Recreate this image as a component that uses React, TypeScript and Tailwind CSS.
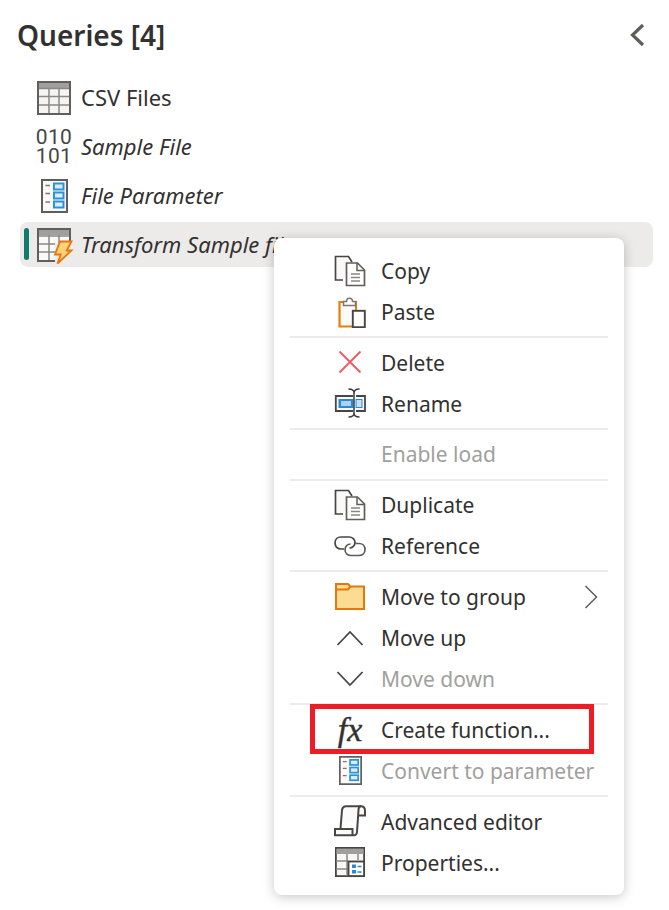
import React from "react";

/* ---------------------------------- Icons --------------------------------- */
function TableIcon() {
  return (
    <svg width="34" height="34" viewBox="0 0 34 34" fill="none">
      <rect x="1" y="1" width="32" height="32" fill="#f5f4f3" stroke="#605e5c" strokeWidth="2" />
      <rect x="2" y="2" width="30" height="5" fill="#a19f9d" />
      <path d="M2 7.5H32M2 15.5H32M2 24H32" stroke="#8a8886" strokeWidth="1.5" />
      <path d="M12 7V32M22 7V32" stroke="#8a8886" strokeWidth="1.5" />
    </svg>
  );
}

function ParamIcon({ width = 27, height = 34 }: { width?: number; height?: number }) {
  return (
    <svg width={width} height={height} viewBox="0 0 27 34" fill="none">
      <rect x="1" y="1" width="25" height="32" fill="#faf9f8" stroke="#605e5c" strokeWidth="2" />
      <path d="M4.5 6.5H9M4.5 14.5H9M4.5 23H9" stroke="#7a7876" strokeWidth="1.5" />
      <rect x="13" y="4.5" width="9.5" height="6" fill="#deecf9" stroke="#2b94d8" strokeWidth="2" />
      <rect x="13" y="13.5" width="9.5" height="6" fill="#deecf9" stroke="#2b94d8" strokeWidth="2" />
      <rect x="13" y="22.5" width="9.5" height="6" fill="#deecf9" stroke="#2b94d8" strokeWidth="2" />
    </svg>
  );
}

function TransformIcon() {
  return (
    <svg width="34" height="34" viewBox="0 0 34 34" fill="none" className="overflow-visible">
      <rect x="1" y="1" width="32" height="32" fill="#fbfafa" stroke="#605e5c" strokeWidth="2" />
      <rect x="2" y="2" width="30" height="5" fill="#a19f9d" />
      <path d="M2 8H32M2 16H32M2 24H20M12 7V32M22 7V20" stroke="#8a8886" strokeWidth="1.5" />
      <path d="M18 15H34V36H18Z" fill="#edebe9" />
      <path d="M23 13.5H34.5L29.7 22.5H34.5L20.5 35.5L23.7 26.5H18Z" fill="#fbd27a" stroke="#e3780c" strokeWidth="1.8" />
    </svg>
  );
}

function CopyIcon() {
  return (
    <svg width="32" height="32" viewBox="0 0 32 32" fill="none">
      <path d="M9 25H1.5V1.5H14.5L18 7" fill="#faf9f8" stroke="#484644" strokeWidth="1.7" />
      <path d="M12.5 8H23.5L30.5 15V30.5H12.5Z" fill="#fff" stroke="#605e5c" strokeWidth="1.7" />
      <path d="M23 8V15.5H30.5" stroke="#605e5c" strokeWidth="1.5" />
      <path d="M17 19H26M17 22.5H26M17 26H26" stroke="#8a8886" strokeWidth="1.4" />
    </svg>
  );
}

function PasteIcon() {
  return (
    <svg width="32" height="32" viewBox="0 0 32 32" fill="none">
      <path d="M9 6H5.5V30.5H18M19 6H22V14" fill="#fdf1dc" stroke="#e3810f" strokeWidth="2.2" />
      <path d="M7 7.5H20.5V14H18V29H7Z" fill="#fbfaf9" />
      <path d="M9.5 9.5V5.5H12.5C12.5 1 18.5 1 18.5 5.5H21.5V9.5Z" fill="#fff" stroke="#7a7876" strokeWidth="1.5" />
      <rect x="18.8" y="14.8" width="12" height="16.4" fill="#fff" stroke="#484644" strokeWidth="1.9" />
    </svg>
  );
}

function DeleteIcon() {
  return (
    <svg width="24" height="24" viewBox="0 0 24 24" fill="none">
      <path d="M1.5 1.5L22.5 22.5M22.5 1.5L1.5 22.5" stroke="#f1575f" strokeWidth="1.8" />
    </svg>
  );
}

function RenameIcon() {
  return (
    <svg width="32" height="30" viewBox="0 0 32 30" fill="none">
      <path d="M19 8H1.8V23H19M22 8H31V23H22" fill="#faf9f8" stroke="#484644" strokeWidth="1.8" />
      <rect x="4.5" y="11" width="15" height="9" fill="#2b88d8" />
      <rect x="7" y="13" width="10" height="5" fill="#a9d3f2" />
      <rect x="22" y="11.5" width="6" height="8" fill="#c7e0f4" stroke="#2b88d8" strokeWidth="1" />
      <path d="M14.5 1C18 1 20 2 20 5V25C20 28 18 29 14.5 29M25.5 1C22 1 20 2 20 5M20 25C20 28 22 29 25.5 29" stroke="#3b3a39" strokeWidth="1.5" />
    </svg>
  );
}

function ReferenceIcon() {
  return (
    <svg width="32" height="22" viewBox="0 0 32 22" fill="none">
      <path d="M10 14H7C3.5 14 1 11.5 1 8C1 4.5 3.5 2 7 2H15C18.5 2 21 4.5 21 7.5C21 10.5 18.5 13 15.5 13" stroke="#484644" strokeWidth="1.7" />
      <path d="M21 8.5H25C28.5 8.5 31 11 31 14.5C31 18 28.5 20.5 25 20.5H17C13.5 20.5 11 18 11 14.5C11 11.5 13.5 9 16.5 9" stroke="#605e5c" strokeWidth="1.7" />
    </svg>
  );
}

function FolderIcon() {
  return (
    <svg width="30" height="27" viewBox="0 0 30 27" fill="none">
      <path d="M1 1H13L15.5 3.5H29V26H1Z" fill="#fbdc92" stroke="#e3780c" strokeWidth="2" />
      <path d="M1 6.5H13L15.5 3.5" stroke="#e3780c" strokeWidth="2" />
    </svg>
  );
}

function ChevronUpIcon() {
  return (
    <svg width="28" height="16" viewBox="0 0 28 16" fill="none">
      <path d="M1.5 15L14 2L26.5 15" stroke="#484644" strokeWidth="1.8" />
    </svg>
  );
}

function ChevronDownIcon() {
  return (
    <svg width="28" height="16" viewBox="0 0 28 16" fill="none">
      <path d="M1.5 1L14 14L26.5 1" stroke="#484644" strokeWidth="1.8" />
    </svg>
  );
}

function ScrollIcon() {
  return (
    <svg width="32" height="32" viewBox="0 0 32 32" fill="none">
      <path d="M6.5 24L8 5C8.5 2.5 10 1.3 12 1.3H27C29.5 1.3 31 3 31 6V10.5H24.5" fill="#fbfafa" stroke="#484644" strokeWidth="2" />
      <path d="M27 1.3C25 1.3 24.5 3 24.5 5L23 27C22.8 29 22 30.2 20.5 30.2H1V24H18.5V30" fill="#fbfafa" stroke="#484644" strokeWidth="2" />
    </svg>
  );
}

function PropertiesIcon() {
  return (
    <svg width="32" height="32" viewBox="0 0 32 32" fill="none">
      <rect x="1.9" y="1.9" width="28.2" height="28.2" fill="#f8f7f6" stroke="#484644" strokeWidth="1.8" />
      <rect x="2.5" y="3" width="27" height="5" fill="#a19f9d" />
      <path d="M2 15H14M2 23H14M13 8V30M24 8V14" stroke="#8a8886" strokeWidth="1.5" />
      <rect x="14.5" y="15.5" width="15.6" height="14.6" fill="#fff" stroke="#484644" strokeWidth="1.9" />
      <rect x="18" y="18.5" width="4" height="3.5" fill="#2b88d8" />
      <rect x="18" y="24" width="4" height="3.5" fill="#2b88d8" />
      <path d="M23.5 20.5H27.5M23.5 26H27.5" stroke="#2b88d8" strokeWidth="1.4" />
    </svg>
  );
}

/* --------------------------------- Pieces --------------------------------- */
function QueryRow({ icon, label, italic }: { icon: React.ReactNode; label: string; italic?: boolean }) {
  return (
    <div className="flex h-[45px] items-center pl-[17px]">
      <div className="flex w-[34px] justify-center">{icon}</div>
      <span className={`ml-[10px] text-[22px] text-[#323130] ${italic ? "italic" : ""}`}>{label}</span>
    </div>
  );
}

function MenuItem({ icon, label, disabled }: { icon?: React.ReactNode; label: string; disabled?: boolean }) {
  return (
    <div className="flex h-[41px] items-center">
      <div className="flex w-[107px] justify-end pr-[15px]">
        <div className="flex w-[32px] justify-center">{icon}</div>
      </div>
      <span className={`pt-[2px] text-[21px] ${disabled ? "text-[#a19f9d]" : "text-[#323130]"}`}>{label}</span>
    </div>
  );
}

function Divider() {
  return (
    <div className="flex h-[9.83px] items-center px-4">
      <div className="h-[2px] w-full bg-[#edebe9]" />
    </div>
  );
}

/* ------------------------------ Main Function ----------------------------- */
export default function App() {
  return (
    <div className="relative h-[910px] w-[669px] overflow-hidden bg-white font-['Noto_Sans','Open_Sans',sans-serif]">
      <div className="flex items-center justify-between pl-[17px] pr-[24px] pt-[16px]">
        <h1 className="text-[28px] leading-[38px] font-semibold text-[#323130]">Queries [4]</h1>
        <svg width="16" height="24" viewBox="0 0 16 24" fill="none">
          <path d="M14 2L3.5 12L14 22" stroke="#605e5c" strokeWidth="3.2" />
        </svg>
      </div>

      <div className="mt-[21px] ml-[20px] flex w-[633px] flex-col gap-1">
        <QueryRow icon={<TableIcon />} label="CSV Files" />
        <QueryRow
          icon={
            <div className="w-[40px] shrink-0 text-center font-['Roboto',sans-serif] text-[21px] leading-[19px] tracking-[0.3px] text-[#484644]">
              010 101
            </div>
          }
          label="Sample File"
          italic
        />
        <QueryRow icon={<ParamIcon />} label="File Parameter" italic />
        <div className="relative rounded-lg bg-[#edebe9]">
          <div className="absolute top-[6px] left-[4px] h-[32px] w-[5px] rounded-sm bg-[#107c6c]" />
          <QueryRow icon={<TransformIcon />} label="Transform Sample file" italic />
        </div>
      </div>

      <div className="absolute top-[238px] left-[274px] w-[350px] rounded-lg bg-white py-3 shadow-[0_2px_12px_rgba(0,0,0,0.22)]">
        <MenuItem icon={<CopyIcon />} label="Copy" />
        <MenuItem icon={<PasteIcon />} label="Paste" />
        <Divider />
        <MenuItem icon={<DeleteIcon />} label="Delete" />
        <MenuItem icon={<RenameIcon />} label="Rename" />
        <Divider />
        <MenuItem label="Enable load" disabled />
        <Divider />
        <MenuItem icon={<CopyIcon />} label="Duplicate" />
        <MenuItem icon={<ReferenceIcon />} label="Reference" />
        <Divider />
        <div className="relative">
          <MenuItem icon={<FolderIcon />} label="Move to group" />
          <svg className="absolute top-[9px] right-[26px]" width="14" height="24" viewBox="0 0 14 24" fill="none">
            <path d="M1.5 1L12.5 12L1.5 23" stroke="#605e5c" strokeWidth="1.5" />
          </svg>
        </div>
        <MenuItem icon={<ChevronUpIcon />} label="Move up" />
        <MenuItem icon={<ChevronDownIcon />} label="Move down" disabled />
        <Divider />
        <MenuItem
          icon={
            <span className="font-['Liberation_Serif',serif] text-[34px] leading-none text-[#323130] italic [-webkit-text-stroke:0.4px_#323130]">
              fx
            </span>
          }
          label="Create function..."
        />
        <MenuItem icon={<ParamIcon width={23} height={29} />} label="Convert to parameter" disabled />
        <Divider />
        <MenuItem icon={<ScrollIcon />} label="Advanced editor" />
        <MenuItem icon={<PropertiesIcon />} label="Properties..." />
      </div>

      <div className="absolute top-[704px] left-[310px] h-[50px] w-[284px] border-[5px] border-[#ee1c25]" />
    </div>
  );
}
